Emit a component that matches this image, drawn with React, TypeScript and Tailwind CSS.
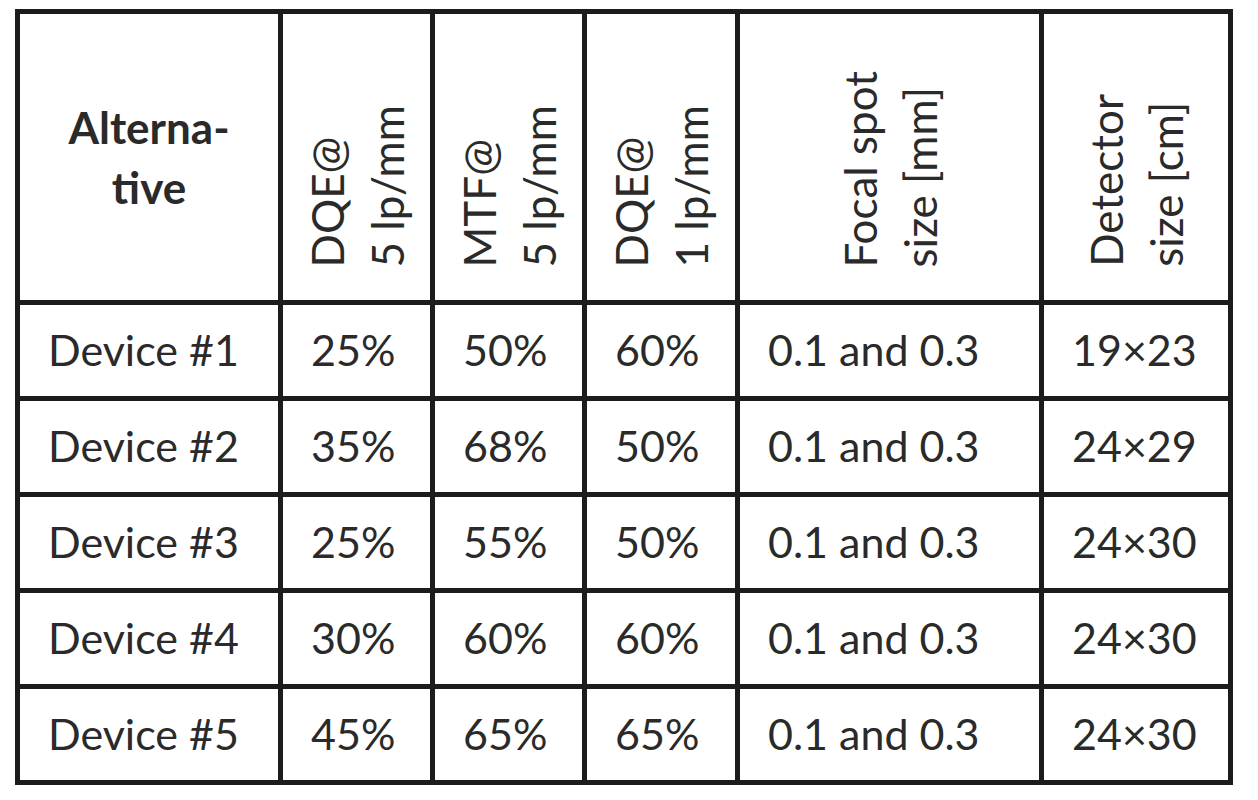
import React from 'react';

interface Row {
  name: string;
  dqe5: string;
  mtf5: string;
  dqe1: string;
  focal: string;
  detector: string;
}

const rows: Row[] = [
  { name: 'Device #1', dqe5: '25%', mtf5: '50%', dqe1: '60%', focal: '0.1 and 0.3', detector: '19×23' },
  { name: 'Device #2', dqe5: '35%', mtf5: '68%', dqe1: '50%', focal: '0.1 and 0.3', detector: '24×29' },
  { name: 'Device #3', dqe5: '25%', mtf5: '55%', dqe1: '50%', focal: '0.1 and 0.3', detector: '24×30' },
  { name: 'Device #4', dqe5: '30%', mtf5: '60%', dqe1: '60%', focal: '0.1 and 0.3', detector: '24×30' },
  { name: 'Device #5', dqe5: '45%', mtf5: '65%', dqe1: '65%', focal: '0.1 and 0.3', detector: '24×30' },
];

const VerticalHeader: React.FC<{ lines: string[] }> = ({ lines }) => (
  <div className="bg-white flex items-end justify-center pb-[33px]">
    <div className="[writing-mode:vertical-rl] rotate-180 leading-[60px] text-left">
      {lines.map((line) => (
        <div key={line} className="whitespace-nowrap">
          {line}
        </div>
      ))}
    </div>
  </div>
);

const Cell: React.FC<{ children: React.ReactNode }> = ({ children }) => (
  <div className="bg-white flex items-center pl-[28px] whitespace-nowrap text-[43px]">{children}</div>
);

export default function App() {
  return (
    <div className="min-h-[800px] bg-white pt-[9px] pl-[15px]">
      <div
        className="inline-grid grid-cols-[258px_147px_147px_148px_299px_184px] grid-rows-[286px_repeat(5,91px)] gap-[5px] p-[5px] bg-[#1c1c1c] text-[44px] text-[#2a2a2a]"
        style={{ fontFamily: 'Lato, "Open Sans", sans-serif' }}
      >
        <div className="bg-white flex items-center justify-center text-center font-bold leading-[60px]">
          <div>
            Alterna-
            <br />
            tive
          </div>
        </div>
        <VerticalHeader lines={['DQE@', '5 lp/mm']} />
        <VerticalHeader lines={['MTF@', '5 lp/mm']} />
        <VerticalHeader lines={['DQE@', '1 lp/mm']} />
        <VerticalHeader lines={['Focal spot', 'size [mm]']} />
        <VerticalHeader lines={['Detector', 'size [cm]']} />

        {rows.map((r) => (
          <React.Fragment key={r.name}>
            <Cell>{r.name}</Cell>
            <Cell>{r.dqe5}</Cell>
            <Cell>{r.mtf5}</Cell>
            <Cell>{r.dqe1}</Cell>
            <Cell>{r.focal}</Cell>
            <Cell>{r.detector}</Cell>
          </React.Fragment>
        ))}
      </div>
    </div>
  );
}
